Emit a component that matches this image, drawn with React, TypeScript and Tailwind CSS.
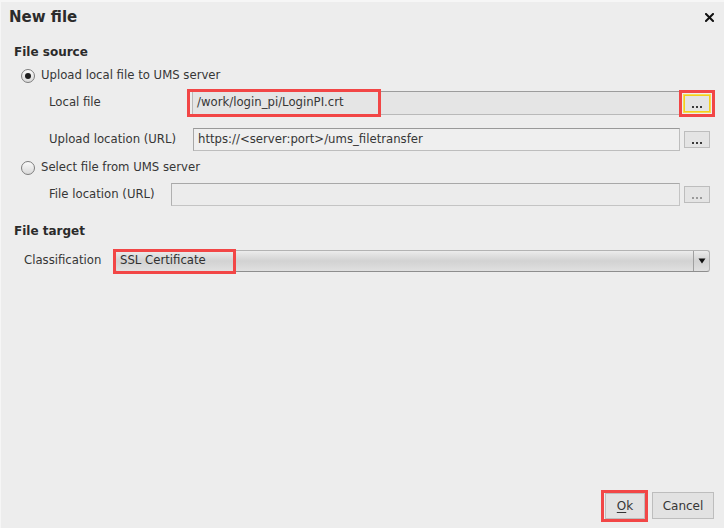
import React from "react";

const font = { fontFamily: '"DejaVu Sans", "Liberation Sans", sans-serif' };

function Radio({ checked }: { checked?: boolean }) {
  return (
    <div className="w-[14px] h-[14px] rounded-full border border-[#7d7d7d] bg-gradient-to-b from-[#fafafa] to-[#d9d9d9] flex items-center justify-center shrink-0">
      {checked && <div className="w-[6px] h-[6px] rounded-full bg-[#1e1e1e]" />}
    </div>
  );
}

function Dots({ disabled, focused }: { disabled?: boolean; focused?: boolean }) {
  return (
    <div
      className={
        "w-[26px] h-[17px] shrink-0 border bg-[#e4e4e4] flex items-end justify-center pb-[3px] gap-[2px] " +
        (focused ? "border-[#f2cf1c] outline outline-1 outline-[#f6dd55]" : "border-[#bdbdbd]")
      }
    >
      <span className={"w-[2px] h-[2px] " + (disabled ? "bg-[#9a9a9a]" : "bg-[#3a3a3a]")} />
      <span className={"w-[2px] h-[2px] " + (disabled ? "bg-[#9a9a9a]" : "bg-[#3a3a3a]")} />
      <span className={"w-[2px] h-[2px] " + (disabled ? "bg-[#9a9a9a]" : "bg-[#3a3a3a]")} />
    </div>
  );
}

export default function App() {
  return (
    <div
      className="w-[724px] h-[528px] bg-[#ededed] flex flex-col text-[#363636] border-t-2 border-t-[#f6f6f6] border-l border-l-[#f6f6f6] overflow-hidden"
      style={font}
    >
      {/* Title bar */}
      <div className="h-[30px] flex items-center justify-between pl-[8px] pr-[10px]">
        <span className="text-[15px] font-bold text-[#2b2b2b] leading-none">New file</span>
        <svg width="9" height="9" viewBox="0 0 9 9">
          <path d="M1 1 L8 8 M8 1 L1 8" stroke="#111" strokeWidth="2" strokeLinecap="square" />
        </svg>
      </div>

      <div className="flex-1 flex flex-col pl-[13px] pr-[14px]">
        <div className="mt-[12px] h-[16px] leading-[16px] text-[12px] font-bold text-[#2b2b2b]">File source</div>

        <div className="mt-[8px] h-[16px] flex items-center pl-[7px] gap-[6px] text-[11.7px]">
          <Radio checked />
          <span>Upload local file to UMS server</span>
        </div>

        <div className="mt-[7px] h-[24px] flex items-center text-[11.7px]">
          <span className="w-[178px] pl-[35px] shrink-0">Local file</span>
          <div className="relative flex-1 h-[24px] border border-[#b9b9b9] border-t-[#9c9c9c] bg-[#e5e5e5] flex items-center pl-[4px]">
            <span>/work/login_pi/LoginPI.crt</span>
            <div className="absolute left-[-6px] top-[-3px] w-[194px] h-[28px] border-[3px] border-[#f24646]" />
          </div>
          <div className="relative ml-[4px]">
            <Dots focused />
            <div className="absolute left-[-5px] top-[-5px] w-[36px] h-[27px] border-[3px] border-[#f24646]" />
          </div>
        </div>

        <div className="mt-[13px] h-[23px] flex items-center text-[11.7px]">
          <span className="w-[179px] pl-[35px] shrink-0">Upload location (URL)</span>
          <div className="flex-1 h-[23px] border border-[#bdbdbd] border-t-[#999] border-l-[#a8a8a8] bg-[#efefef] flex items-center pl-[4px]">
            <span>https://&lt;server:port&gt;/ums_filetransfer</span>
          </div>
          <div className="ml-[4px]">
            <Dots />
          </div>
        </div>

        <div className="mt-[9px] h-[16px] flex items-center pl-[7px] gap-[6px] text-[11.7px]">
          <Radio />
          <span>Select file from UMS server</span>
        </div>

        <div className="mt-[7px] h-[23px] flex items-center text-[11.7px]">
          <span className="w-[157px] pl-[35px] shrink-0">File location (URL)</span>
          <div className="flex-1 h-[23px] border border-[#c4c4c4] border-t-[#a8a8a8] border-l-[#b0b0b0] bg-[#ececec]" />
          <div className="ml-[4px]">
            <Dots disabled />
          </div>
        </div>

        <div className="mt-[17px] h-[16px] leading-[16px] text-[12px] font-bold text-[#2b2b2b]">File target</div>

        <div className="mt-[11px] h-[22px] flex items-center text-[11.7px]">
          <span className="w-[100px] pl-[10px] shrink-0">Classification</span>
          <div className="relative flex-1 h-[22px] rounded-[3px] border border-[#b3b3b3] border-b-[#8e8e8e] bg-gradient-to-b from-[#ececec] via-[#d2d2d2] to-[#e0e0e0] flex items-center">
            <span className="flex-1 pl-[5px] text-[#303030]">SSL Certificate</span>
            <div className="w-[16px] h-full border-l border-l-[#a0a0a0] flex items-center justify-center">
              <svg width="8" height="6" viewBox="0 0 8 6">
                <path d="M0.5 0.5 L7.5 0.5 L4 5.5 Z" fill="#111" />
              </svg>
            </div>
            <div className="absolute left-[-2px] top-[-2px] w-[123px] h-[25px] border-[3px] border-[#f24646]" />
          </div>
        </div>

        <div className="flex-1" />

        <div className="flex justify-end items-center gap-[7px] pb-[9px] -mr-[4px] text-[12px]">
          <div className="relative">
            <div className="w-[40px] h-[26px] border border-[#bdbdbd] bg-[#e2e2e2] flex items-center justify-center">
              <span>
                <span className="underline underline-offset-2">O</span>k
              </span>
            </div>
            <div className="absolute left-[-4px] top-[-3px] w-[47px] h-[32px] border-[3px] border-[#f24646]" />
          </div>
          <div className="w-[62px] h-[27px] border border-[#bdbdbd] bg-[#e2e2e2] flex items-center justify-center">
            Cancel
          </div>
        </div>
      </div>
    </div>
  );
}
